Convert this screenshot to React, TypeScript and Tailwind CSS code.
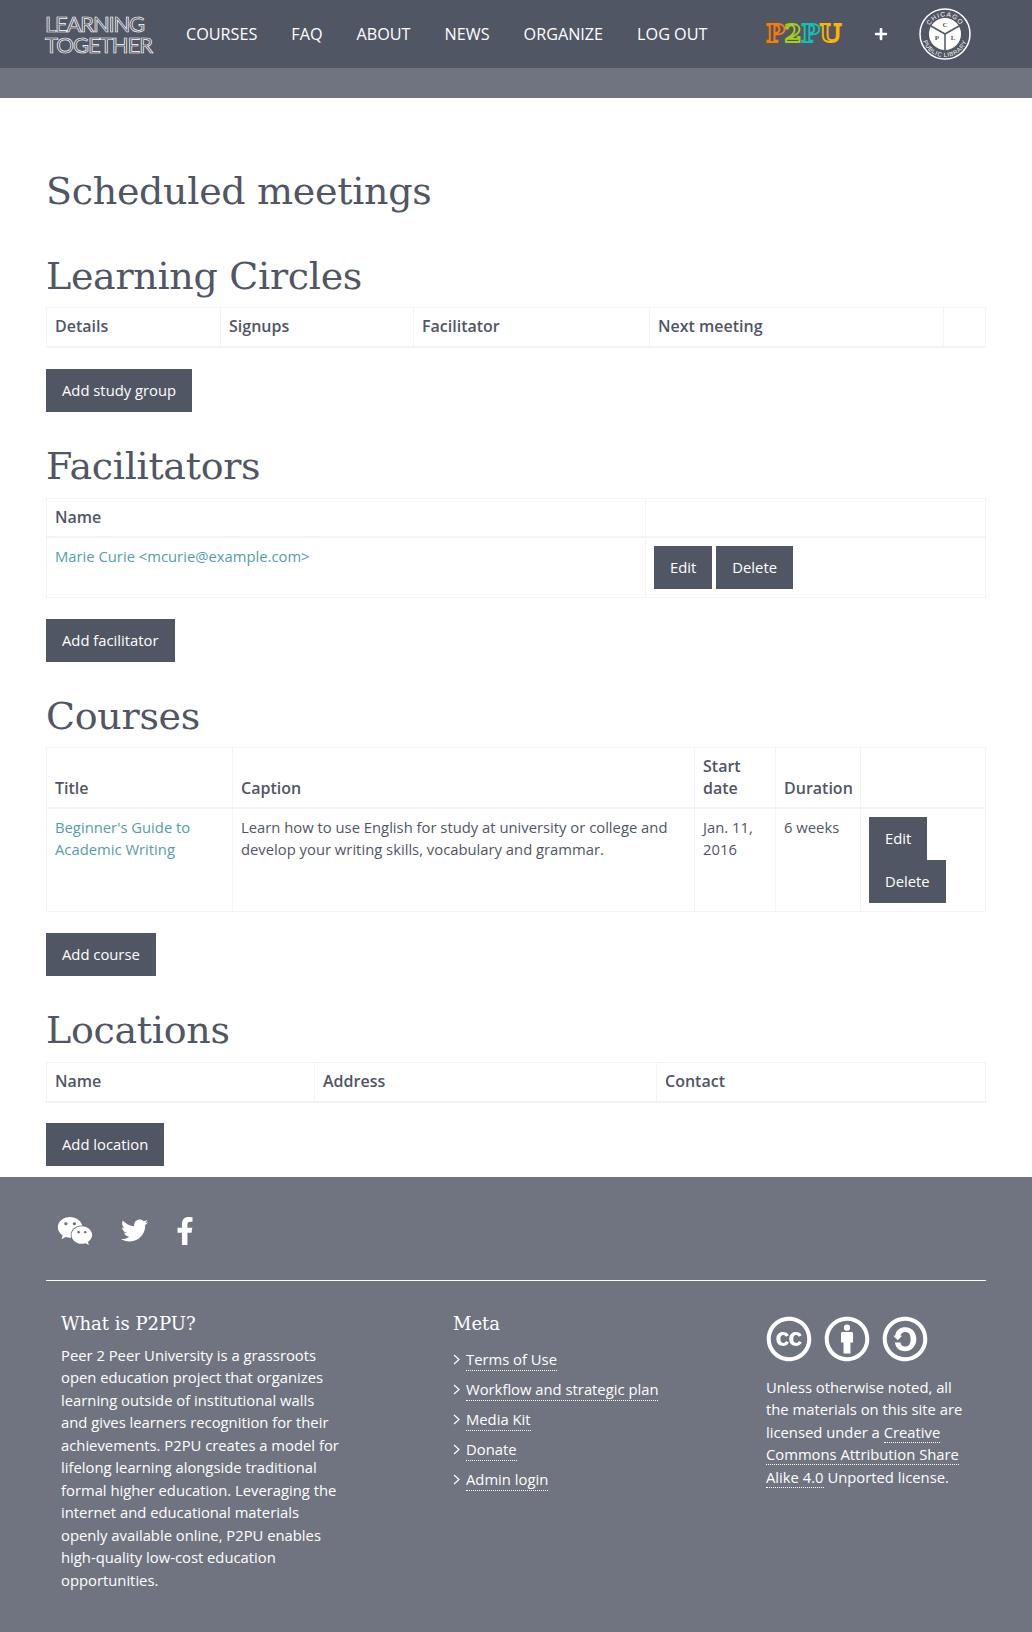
import * as React from "react";
import { FaWeixin, FaTwitter, FaFacebookF, FaCreativeCommons, FaCreativeCommonsBy, FaCreativeCommonsSa, FaPlus } from "react-icons/fa";

const navItems = ["COURSES", "FAQ", "ABOUT", "NEWS", "ORGANIZE", "LOG OUT"];
const metaLinks = ["Terms of Use", "Workflow and strategic plan", "Media Kit", "Donate", "Admin login"];

function Btn({ children }: { children: React.ReactNode }) {
  return (
    <a className="inline-block h-[43px] bg-[#515665] px-4 leading-[43px] text-white">
      {children}
    </a>
  );
}

function Heading({ children }: { children: React.ReactNode }) {
  return (
    <h2 className="font-['DejaVu_Serif',serif] text-[38px] leading-[40px] text-[#515665] tracking-[-0.3px]">
      {children}
    </h2>
  );
}

function Th({ children }: { children?: React.ReactNode }) {
  return (
    <th className="border border-b-2 border-[#f2f2f7] p-2 text-left align-bottom text-[16px] font-semibold leading-[21.5px]">
      {children}
    </th>
  );
}

function Td({ children }: { children?: React.ReactNode }) {
  return <td className="border border-[#f2f2f7] p-2 align-top">{children}</td>;
}

function TextTd({ children }: { children?: React.ReactNode }) {
  return <td className="border border-[#f2f2f7] px-2 pt-[7px] pb-2 align-top leading-[22px]">{children}</td>;
}

function Logo() {
  return (
    <div className="w-[108px] font-['Lato',sans-serif] text-[22px] leading-[21px] whitespace-nowrap text-transparent [-webkit-text-stroke:0.7px_white]">
      <div className="tracking-[-1.2px]">LEARNING</div>
      <div className="tracking-[-1px]">TOGETHER</div>
    </div>
  );
}

function P2puLogo() {
  return (
    <div className="flex w-[75px] font-['DejaVu_Serif',serif] text-[25px] leading-[28px] font-bold text-transparent tracking-[-0.5px]">
      <span className="[-webkit-text-stroke:1.8px_#ff7a00]">P</span>
      <span className="[-webkit-text-stroke:1.8px_#a6ce16]">2</span>
      <span className="[-webkit-text-stroke:1.8px_#0dc4b4]">P</span>
      <span className="[-webkit-text-stroke:1.8px_#ffb400]">U</span>
    </div>
  );
}

function CplLogo() {
  return (
    <svg width="52" height="52" viewBox="0 0 52 52">
      <defs>
        <path id="cplTop" d="M8.5 26 A17.5 17.5 0 0 1 43.5 26" />
        <path id="cplBottom" d="M3 26 A23 23 0 0 0 49 26" />
      </defs>
      <circle cx="26" cy="26" r="25" fill="none" stroke="white" strokeWidth="1.5" />
      <circle cx="26" cy="26" r="16" fill="white" />
      <path d="M26 26 L26 42 M26 26 L12 18 M26 26 L40 18" stroke="#515665" strokeWidth="1.5" />
      <text fontSize="6.5" fill="white" fontFamily="Liberation Sans" letterSpacing="1" textAnchor="middle">
        <textPath href="#cplTop" startOffset="50%">CHICAGO</textPath>
      </text>
      <text fontSize="6" fill="white" fontFamily="Liberation Sans" letterSpacing="0.6" textAnchor="middle">
        <textPath href="#cplBottom" startOffset="50%">PUBLIC LIBRARY</textPath>
      </text>
      <text x="26" y="19" fontSize="7" fontWeight="bold" fill="#515665" textAnchor="middle" fontFamily="Liberation Serif">C</text>
      <text x="18" y="32" fontSize="7" fontWeight="bold" fill="#515665" textAnchor="middle" fontFamily="Liberation Serif">P</text>
      <text x="34" y="32" fontSize="7" fontWeight="bold" fill="#515665" textAnchor="middle" fontFamily="Liberation Serif">L</text>
    </svg>
  );
}

const dotted = "border-b border-dotted border-white";

export default function App() {
  return (
    <div className="w-[1032px] font-['Open_Sans',sans-serif] text-[14.8px] leading-[22.5px] text-[#515665] bg-white">
      <header className="flex h-[68px] items-center bg-[#515665] pl-[45px] text-white">
        <Logo />
        <nav className="ml-[33px] flex w-[521px] gap-[34px] text-[16.2px] whitespace-nowrap">
          {navItems.map((item) => (
            <a key={item}>{item}</a>
          ))}
        </nav>
        <div className="ml-[59px]"><P2puLogo /></div>
        <FaPlus className="ml-[33px] text-[14px]" />
        <div className="ml-[31px]"><CplLogo /></div>
      </header>
      <div className="h-[30px] bg-[#6f7480]" />

      <main className="px-[46px] pt-[71px]">
        <h1 className="font-['DejaVu_Serif',serif] text-[38px] leading-[44px] tracking-[-0.3px]">Scheduled meetings</h1>

        <div className="mt-[43px]"><Heading>Learning Circles</Heading></div>
        <table className="mt-[11px] w-full table-fixed border-collapse">
          <colgroup>
            <col className="w-[174px]" />
            <col className="w-[193px]" />
            <col className="w-[236px]" />
            <col className="w-[294px]" />
            <col />
          </colgroup>
          <thead>
            <tr>
              <Th>Details</Th>
              <Th>Signups</Th>
              <Th>Facilitator</Th>
              <Th>Next meeting</Th>
              <Th />
            </tr>
          </thead>
        </table>
        <div className="mt-[21px]"><Btn>Add study group</Btn></div>

        <div className="mt-[34px]"><Heading>Facilitators</Heading></div>
        <table className="mt-[12px] w-full table-fixed border-collapse">
          <colgroup>
            <col className="w-[599px]" />
            <col />
          </colgroup>
          <thead>
            <tr>
              <Th>Name</Th>
              <Th />
            </tr>
          </thead>
          <tbody>
            <tr>
              <TextTd><a className="text-[#55a0a6]">Marie Curie &lt;mcurie@example.com&gt;</a></TextTd>
              <Td>
                <div className="flex gap-1"><Btn>Edit</Btn><Btn>Delete</Btn></div>
              </Td>
            </tr>
          </tbody>
        </table>
        <div className="mt-[21px]"><Btn>Add facilitator</Btn></div>

        <div className="mt-[34px]"><Heading>Courses</Heading></div>
        <table className="mt-[11px] w-full table-fixed border-collapse">
          <colgroup>
            <col className="w-[186px]" />
            <col className="w-[462px]" />
            <col className="w-[81px]" />
            <col className="w-[85px]" />
            <col />
          </colgroup>
          <thead>
            <tr>
              <Th>Title</Th>
              <Th>Caption</Th>
              <Th>Start date</Th>
              <Th>Duration</Th>
              <Th />
            </tr>
          </thead>
          <tbody>
            <tr>
              <TextTd><a className="text-[#55a0a6]">Beginner's Guide to Academic Writing</a></TextTd>
              <TextTd>Learn how to use English for study at university or college and develop your writing skills, vocabulary and grammar.</TextTd>
              <TextTd>Jan. 11, 2016</TextTd>
              <TextTd>6 weeks</TextTd>
              <Td>
                <div className="flex flex-col items-start"><Btn>Edit</Btn><Btn>Delete</Btn></div>
              </Td>
            </tr>
          </tbody>
        </table>
        <div className="mt-[21px]"><Btn>Add course</Btn></div>

        <div className="mt-[34px]"><Heading>Locations</Heading></div>
        <table className="mt-[12px] w-full table-fixed border-collapse">
          <colgroup>
            <col className="w-[268px]" />
            <col className="w-[342px]" />
            <col />
          </colgroup>
          <thead>
            <tr>
              <Th>Name</Th>
              <Th>Address</Th>
              <Th>Contact</Th>
            </tr>
          </thead>
        </table>
        <div className="mt-[20px]"><Btn>Add location</Btn></div>
      </main>

      <footer className="mt-[11px] h-[455px] bg-[#6f7480] px-[46px] pt-[36px] text-white">
        <div className="flex items-center border-b border-white pb-[31px] pl-[11px]">
          <FaWeixin className="text-[36px]" />
          <FaTwitter className="ml-[28px] text-[27px]" />
          <FaFacebookF className="ml-[23px] text-[28px]" />
        </div>
        <div className="grid grid-cols-[392px_313px_1fr] pl-[15px] pt-[32px]">
          <div>
            <h4 className="font-['DejaVu_Serif',serif] text-[18px] leading-[22px]">What is P2PU?</h4>
            <p className="mt-[9px] w-[280px]">
              Peer 2 Peer University is a grassroots open education project that organizes learning outside of institutional walls and gives learners recognition for their achievements. P2PU creates a model for lifelong learning alongside traditional formal higher education. Leveraging the internet and educational materials openly available online, P2PU enables high-quality low-cost education opportunities.
            </p>
          </div>
          <div>
            <h4 className="font-['DejaVu_Serif',serif] text-[18px] leading-[22px]">Meta</h4>
            <ul className="mt-[13px] flex flex-col gap-[6.6px]">
              {metaLinks.map((link) => (
                <li key={link} className="flex items-center">
                  <svg width="7" height="11" viewBox="0 0 7 11" className="mr-[6px]" fill="none" stroke="white" strokeWidth="1.2">
                    <path d="M1 1 L6 5.5 L1 10" />
                  </svg>
                  <a className={dotted}>{link}</a>
                </li>
              ))}
            </ul>
          </div>
          <div>
            <div className="mt-[3px] flex gap-[12px] text-[46px]">
              <FaCreativeCommons />
              <FaCreativeCommonsBy />
              <FaCreativeCommonsSa />
            </div>
            <p className="mt-[14px] w-[200px]">
              Unless otherwise noted, all the materials on this site are licensed under a{" "}
              <a className={dotted}>Creative Commons Attribution Share Alike 4.0</a> Unported license.
            </p>
          </div>
        </div>
      </footer>
    </div>
  );
}
